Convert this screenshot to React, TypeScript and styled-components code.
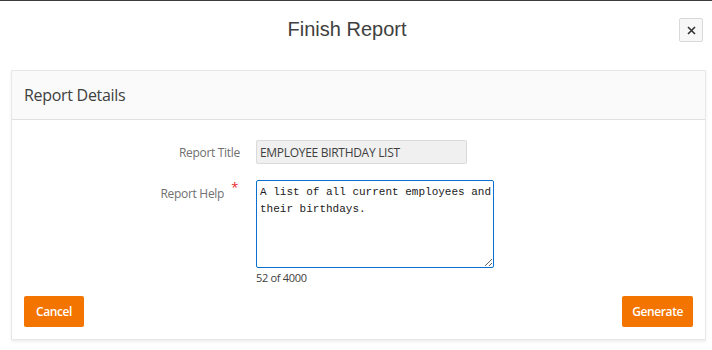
import styled, { createGlobalStyle } from "styled-components";

const GlobalStyle = createGlobalStyle`
  html, body {
    margin: 0;
    padding: 0;
    background: #fff;
  }
  body {
    font-family: "Open Sans", "Noto Sans", sans-serif;
    color: #404040;
  }
`;

const Dialog = styled.div`
  width: 712px;
  height: 350px;
  box-sizing: border-box;
  border-top: 1px solid #3c3c3c;
  display: flex;
  flex-direction: column;
  background: #fff;
  overflow: hidden;
`;

const TitleBar = styled.div`
  height: 59px;
  display: flex;
  align-items: center;
  justify-content: center;
  padding-right: 18px;
  position: relative;
`;

const Title = styled.h1`
  margin: 0;
  font-family: "Liberation Sans", Arial, sans-serif;
  font-weight: 400;
  font-size: 20px;
  color: #404040;
  margin-top: -2px;
`;

const CloseButton = styled.button`
  position: absolute;
  right: 9px;
  top: 17px;
  width: 24px;
  height: 24px;
  padding: 0;
  display: flex;
  align-items: center;
  justify-content: center;
  background: #f7f7f7;
  border: 1px solid #d9d9d9;
  border-radius: 2px;
  cursor: pointer;
`;

const Content = styled.div`
  padding: 10px 6px 0 11px;
`;

const Card = styled.section`
  border: 1px solid #e8e8e8;
  background: #fff;
  box-shadow: 0 2px 3px rgba(0, 0, 0, 0.07);
`;

const CardHeader = styled.header`
  height: 48px;
  display: flex;
  align-items: center;
  padding: 0 12px;
  background: #fafafa;
  border-bottom: 1px solid #e0e0e0;
`;

const CardTitle = styled.h2`
  margin: 0;
  font-size: 16px;
  font-weight: 400;
  color: #404040;
  letter-spacing: -0.3px;
`;

const CardBody = styled.div`
  padding: 20px 12px 12px 12px;
`;

const Form = styled.div`
  display: grid;
  grid-template-columns: 216px 1fr;
  column-gap: 16px;
  row-gap: 16px;
`;

const Label = styled.label<{ $top?: boolean }>`
  display: flex;
  justify-content: flex-end;
  align-items: ${(p) => (p.$top ? "flex-start" : "center")};
  padding-top: ${(p) => (p.$top ? "5px" : "0")};
  font-size: 12px;
  color: #707070;
  letter-spacing: -0.3px;
`;

const Required = styled.span`
  color: #e5262b;
  font-size: 13px;
  line-height: 1;
  margin-left: 7px;
  margin-top: -4px;
  margin-right: 2px;
`;

const Field = styled.div`
  display: flex;
  flex-direction: column;
`;

const TextInput = styled.input`
  width: 211px;
  height: 24px;
  box-sizing: border-box;
  padding: 0 3px;
  font-family: "Open Sans", "Noto Sans", sans-serif;
  font-size: 12px;
  letter-spacing: -0.3px;
  color: #404040;
  background: #f0f0f0;
  border: 1px solid #dadada;
  border-radius: 2px;
  outline: none;
`;

const TextArea = styled.textarea`
  width: 238px;
  height: 88px;
  box-sizing: border-box;
  padding: 3px 1px 3px 3px;
  font-family: "Liberation Mono", "DejaVu Sans Mono", monospace;
  font-size: 11px;
  line-height: 17px;
  color: #1a1a1a;
  background: #fff;
  border: 1px solid #0b6fd0;
  border-radius: 2px;
  outline: none;
  resize: both;
  overflow: hidden;
`;

const Counter = styled.div`
  margin-top: 2px;
  font-size: 11px;
  letter-spacing: -0.3px;
  color: #404040;
`;

const Actions = styled.div`
  display: flex;
  justify-content: space-between;
  margin-top: 11px;
`;

const Button = styled.button<{ $tight?: boolean }>`
  height: 31px;
  padding: 0 ${(p) => (p.$tight ? "10px" : "12px")};
  font-family: "Open Sans", "Noto Sans", sans-serif;
  font-size: 12px;
  font-weight: 600;
  letter-spacing: -0.4px;
  color: #fff;
  background: #f47400;
  border: none;
  border-radius: 2px;
  cursor: pointer;
`;

export default function App() {
  return (
    <>
      <GlobalStyle />
      <Dialog>
        <TitleBar>
          <Title>Finish Report</Title>
          <CloseButton aria-label="Close">
            <svg width="9" height="9" viewBox="0 0 9 9">
              <path d="M1 1 L8 8 M8 1 L1 8" stroke="#333" strokeWidth="1.6" />
            </svg>
          </CloseButton>
        </TitleBar>
        <Content>
          <Card>
            <CardHeader>
              <CardTitle>Report Details</CardTitle>
            </CardHeader>
            <CardBody>
              <Form>
                <Label>Report Title</Label>
                <Field>
                  <TextInput readOnly value="EMPLOYEE BIRTHDAY LIST" />
                </Field>
                <Label $top>
                  Report Help<Required>*</Required>
                </Label>
                <Field>
                  <TextArea
                    readOnly
                    value="A list of all current employees and their birthdays."
                  />
                  <Counter>52 of 4000</Counter>
                </Field>
              </Form>
              <Actions>
                <Button>Cancel</Button>
                <Button $tight>Generate</Button>
              </Actions>
            </CardBody>
          </Card>
        </Content>
      </Dialog>
    </>
  );
}
